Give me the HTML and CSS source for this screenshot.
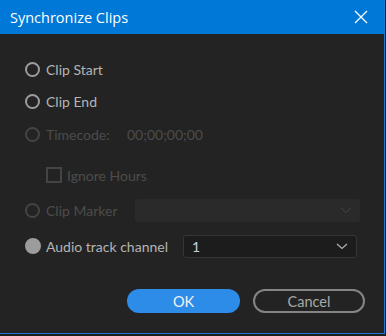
FILE: index.html
```html
<!DOCTYPE html>
<html lang="en">
<head>
  <meta charset="UTF-8" />
  <meta name="viewport" content="width=device-width, initial-scale=1" />
  <title>Synchronize Clips</title>
  <link rel="stylesheet" href="styles.css">
</head>
<body>
  <div class="dialog">
    <div class="titlebar">
      <span class="title">Synchronize Clips</span>
      <svg class="close" width="14" height="14" viewBox="0 0 14 14">
        <path d="M1 1 L13 13 M13 1 L1 13" stroke="#ffffff" stroke-width="1.3" fill="none" />
      </svg>
    </div>

    <div class="content">
      <div class="row row-start">
        <span class="radio"></span>
        <span class="label">Clip Start</span>
      </div>

      <div class="row row-end">
        <span class="radio"></span>
        <span class="label">Clip End</span>
      </div>

      <div class="row row-timecode disabled">
        <span class="radio"></span>
        <span class="label label-tc">Timecode:</span>
        <span class="tc-value">00;00;00;00</span>
      </div>

      <div class="row row-ignore disabled">
        <span class="checkbox"></span>
        <span class="label">Ignore Hours</span>
      </div>

      <div class="row row-marker disabled">
        <span class="radio"></span>
        <span class="label label-marker">Clip Marker</span>
        <div class="select select-off">
          <span class="select-text"></span>
          <svg class="chevron" width="12" height="7" viewBox="0 0 12 7">
            <path d="M1 1 L6 5.5 L11 1" stroke="#3c3c3c" stroke-width="1.2" fill="none" />
          </svg>
        </div>
      </div>

      <div class="row row-audio">
        <span class="radio checked"></span>
        <span class="label label-audio">Audio track channel</span>
        <div class="select select-on">
          <span class="select-text">1</span>
          <svg class="chevron" width="12" height="7" viewBox="0 0 12 7">
            <path d="M1 1 L6 5.5 L11 1" stroke="#b0b0b0" stroke-width="1.2" fill="none" />
          </svg>
        </div>
      </div>

      <div class="buttons">
        <button class="btn btn-ok">OK</button>
        <button class="btn btn-cancel">Cancel</button>
      </div>
    </div>
  </div>
</body>
</html>
```

FILE: styles.css
```css
body {
  margin: 0;
  padding: 0;
  background: #1e1e1e;
  font-family: Lato, "Noto Sans", sans-serif;
}

.dialog {
  width: 385px;
  height: 334px;
  background: #232323;
  border-right: 1px solid #1a7ad6;
  border-bottom: 1px solid #1a7ad6;
  box-sizing: border-box;
}

.titlebar {
  height: 34px;
  background: #0078d7;
  display: flex;
  align-items: center;
  justify-content: space-between;
  padding: 0 16px 0 10px;
}

.title {
  color: #ffffff;
  font-family: "Open Sans", "Noto Sans", sans-serif;
  font-size: 14.5px;
}

.content {
  padding-left: 25px;
  padding-right: 19px;
}

.row {
  display: flex;
  align-items: center;
  height: 24px;
  color: #b4b4b4;
  font-size: 14px;
}

.row-start { margin-top: 23px; }
.row-end { margin-top: 8px; }
.row-timecode { margin-top: 9px; }
.row-ignore { margin-top: 17px; padding-left: 21px; }
.row-marker { margin-top: 11px; }
.row-audio { margin-top: 12px; }

.disabled {
  color: #4c4c4c;
}

.label-tc { width: 81px; }
.label-marker { width: 89px; }
.label-audio { width: 137px; }

.radio {
  width: 15px;
  height: 15px;
  border: 2px solid #9c9c9c;
  border-radius: 50%;
  box-sizing: border-box;
  margin-right: 6px;
  flex-shrink: 0;
}

.disabled .radio {
  border-color: #444444;
}

.radio.checked {
  background: #9c9c9c;
  width: 16px;
  height: 16px;
  margin-right: 5px;
}

.checkbox {
  width: 16px;
  height: 16px;
  border: 2px solid #444444;
  box-sizing: border-box;
  margin-right: 5px;
}

.select {
  display: flex;
  align-items: center;
  justify-content: space-between;
  height: 23px;
  box-sizing: border-box;
  border-radius: 3px;
  padding: 0 8px 0 8px;
}

.select-off {
  width: 225px;
  background: #2a2a2a;
}

.select-on {
  width: 174px;
  background: #1c1c1c;
  border: 1px solid #353535;
  color: #c8d2e0;
}

.buttons {
  display: flex;
  justify-content: flex-end;
  gap: 13px;
  margin-top: 31px;
}

.btn {
  height: 24px;
  width: 113px;
  border-radius: 12px;
  font-family: Lato, "Noto Sans", sans-serif;
  font-size: 14.5px;
  box-sizing: border-box;
  padding: 0;
}

.btn-ok {
  background: #2d8ce8;
  border: none;
  color: #f2f2f2;
}

.btn-cancel {
  background: transparent;
  border: 2px solid #858585;
  color: #a8a8a8;
  width: 112px;
}
```
